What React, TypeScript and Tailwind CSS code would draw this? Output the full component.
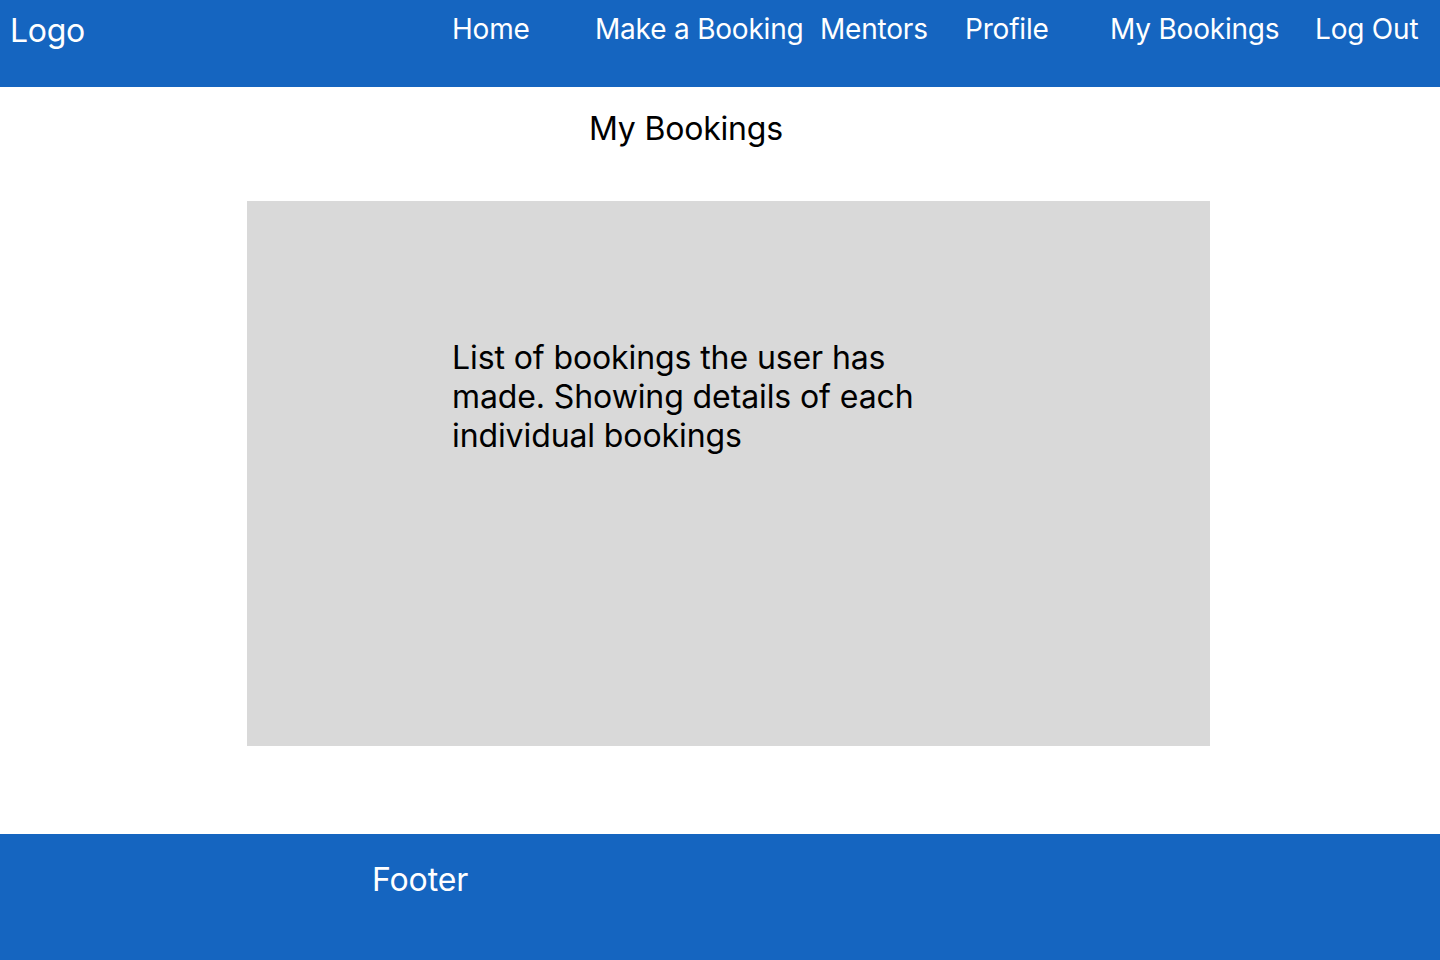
import React from "react";

const navItems = [
  { label: "Home", w: "w-[143px]" },
  { label: "Make a Booking", w: "w-[225px]" },
  { label: "Mentors", w: "w-[145px]" },
  { label: "Profile", w: "w-[145px]" },
  { label: "My Bookings", w: "w-[205px]" },
  { label: "Log Out", w: "w-[125px]" },
];

export default function App() {
  return (
    <div className="w-[1440px] h-[960px] bg-white flex flex-col overflow-hidden" style={{ fontFamily: "Inter, 'Noto Sans', sans-serif" }}>
      <header className="h-[87px] bg-[#1565C0] flex text-white shrink-0">
        <div className="pl-[10px] pt-[12px] w-[452px] text-[32px] leading-[1.21] tracking-[-0.3px]">Logo</div>
        <nav className="flex pt-[13px] text-[28px] leading-[1.21] tracking-[-0.2px]">
          {navItems.map((n) => (
            <a key={n.label} className={`${n.w} whitespace-nowrap`}>{n.label}</a>
          ))}
        </nav>
      </header>
      <main className="flex-1 flex flex-col">
        <h1 className="pl-[589px] pt-[23px] text-[32px] leading-[1.21] tracking-[-0.2px] text-black font-normal">My Bookings</h1>
        <section className="ml-[247px] mt-[52px] w-[963px] h-[545px] bg-[#D9D9D9] pl-[205px] pt-[137px]">
          <p className="w-[475px] text-[32px] leading-[39px] tracking-[-0.1px] text-black">
            List of bookings the user has made. Showing details of each individual bookings
          </p>
        </section>
      </main>
      <footer className="h-[126px] bg-[#1565C0] text-white shrink-0 pl-[372px] pt-[27px]">
        <div className="text-[32px] leading-[1.21] tracking-[-0.1px]">Footer</div>
      </footer>
    </div>
  );
}
